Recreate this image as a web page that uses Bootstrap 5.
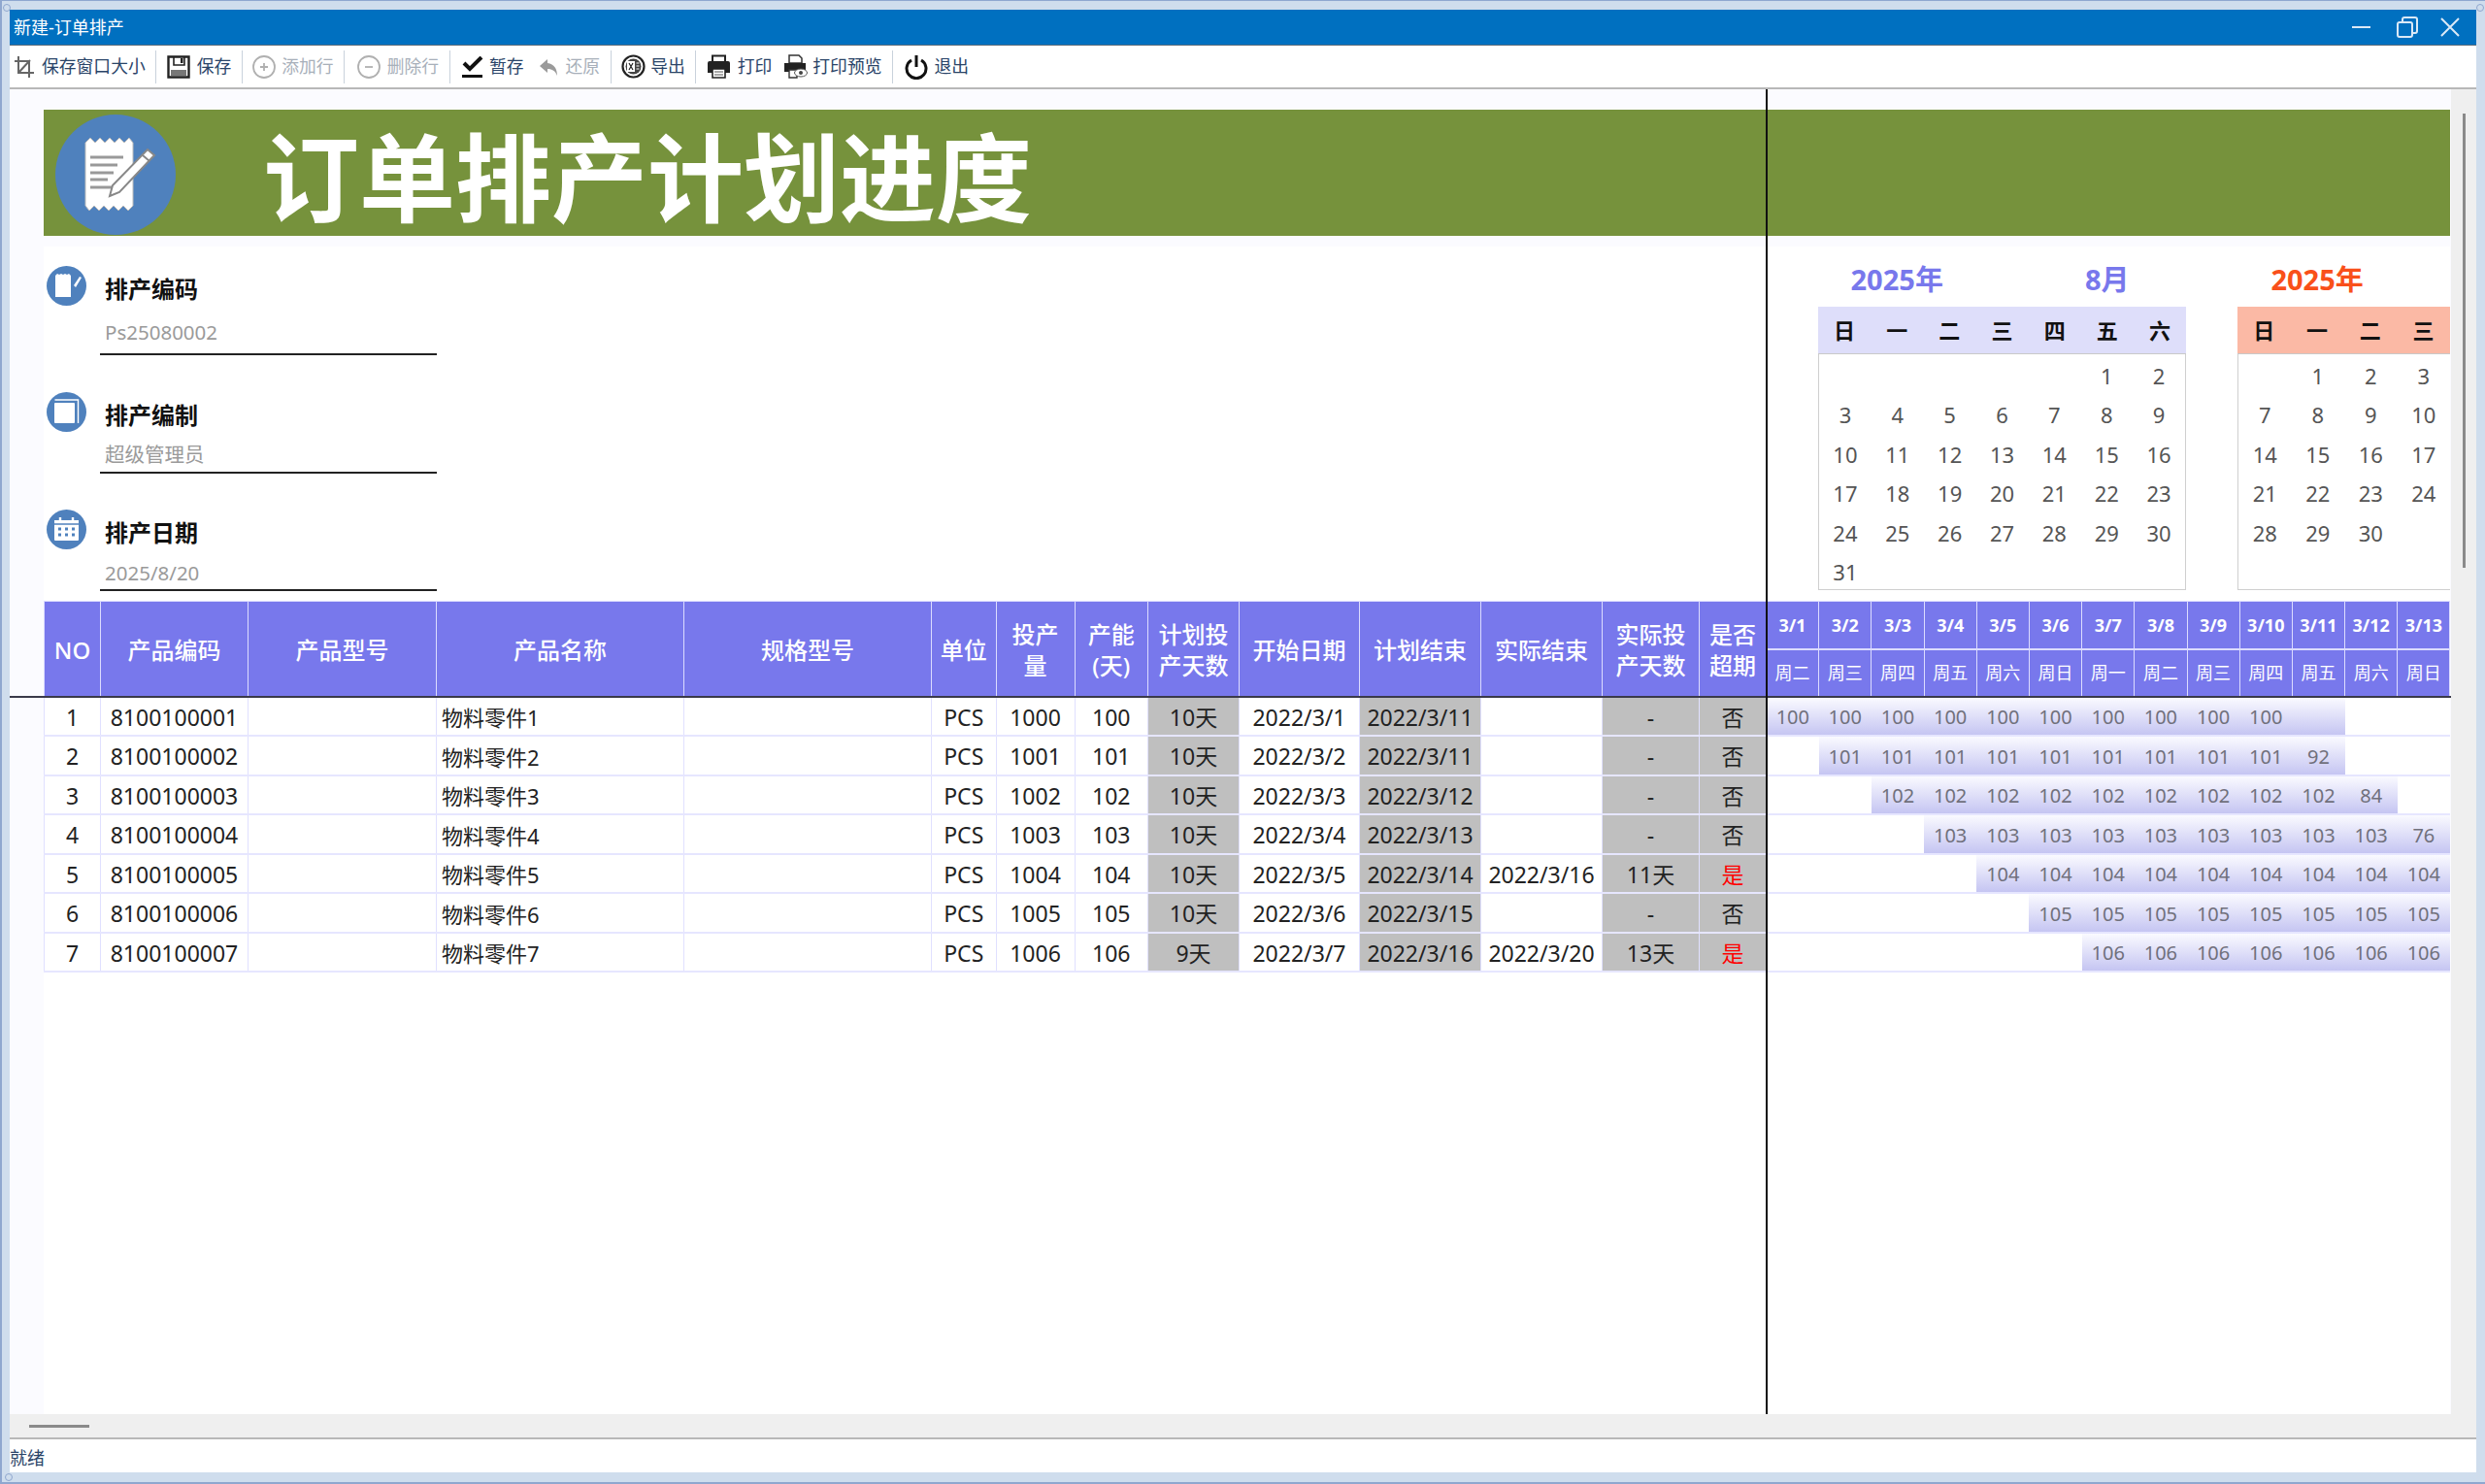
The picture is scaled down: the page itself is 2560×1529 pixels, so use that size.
<!DOCTYPE html>
<html lang="zh-CN">
<head>
<meta charset="UTF-8">
<title>新建-订单排产</title>
<link rel="stylesheet" href="https://cdn.jsdelivr.net/npm/bootstrap@5.3.3/dist/css/bootstrap.min.css">
<style>
    html, body { height: 100%; }
    body {
        font-family: "Noto Sans", "Noto Sans CJK SC", sans-serif;
        background: #cfdded;
        overflow: hidden;
    }
    .win {
        position: relative;
        height: 1529px;
        padding: 9px 9px 9px 8px;
        border-style: solid;
        border-color: #8fa7cf;
        border-width: 1px 0 2px 2px;
    }
    .grip {
        position: absolute;
        width: 8px;
        height: 8px;
        border: 1px solid #8fa7cf;
        border-radius: 50%;
    }
    .grip-tl { left: 1px; top: 3px; }
    .grip-tr { right: 1px; top: 3px; }
    .grip-bl { left: 3px; bottom: 1px; }
    .title-bar {
        height: 37px;
        background: #0070c0;
        border-bottom: 1px solid #5b6b7b;
        color: #fff;
        font-size: 18px;
        padding: 0 17px 0 4px;
    }
    .win-btns { gap: 27px; }
    .win-close { margin-left: -4px; }
    .tool-bar {
        height: 45px;
        background: #fff;
        border-bottom: 2px solid #b8b8b8;
        font-size: 17.8px;
        color: #2a4468;
        white-space: nowrap;
    }
    .tool-btn { padding: 0 6px; gap: 7px; }
    .tool-btn:first-child { padding-left: 4px; }
    .tool-btn.is-off { color: #a8b0ba; }
    .tool-sep { width: 1px; height: 34px; margin: 0 4.5px; background: #c9d2dc; }
    .gap-4px { gap: 4px; }
    .gap-5px { gap: 5px; }
    .gap-6px { gap: 6px; }
    .gap-8px { gap: 8px; }
    .push-2 { margin-left: 2px; }
    .push-3 { margin-left: 3px; }
    .push-4 { margin-left: 4px; }

    .sheet-wrap { height: 1365px; }
    .sheet {
        position: relative;
        background: #fbfbff;
        padding: 21px 1px 0 35px;
        overflow: hidden;
    }
    .freeze-v { position: absolute; left: 1809px; top: 0; bottom: 0; width: 2px; background: #111; }
    .freeze-h { position: absolute; left: 0; right: 0; top: 625px; height: 2px; background: #3a3a4a; }
    .banner { height: 130px; background: #76923c; padding: 5px 0 0 12px; color: #fff; }
    .banner-title {
        font-size: 99px;
        font-weight: 700;
        line-height: 1;
        margin: 15px 0 0 90px;
    }
    .page { background: #fff; margin-top: 11px; }
    .top-part { height: 365px; }
    .info-col { width: 410px; padding-left: 3px; }
    .info-item { gap: 14px; align-items: flex-start; }
    .info-dot { flex: none; width: 41px; height: 41px; margin-top: -8px; }
    .info-text { width: 347px; border-bottom: 2px solid #222; padding-left: 5px; }
    .info-label { font-size: 24px; font-weight: 700; line-height: 32px; color: #111; }
    .info-val { font-size: 20.5px; line-height: 28px; color: #9a9a9a; }
    .item-a { padding-top: 28px; }
    .item-a .info-val { margin-top: 14px; padding-bottom: 8px; }
    .item-b { padding-top: 46px; }
    .item-b .info-val { margin-top: 10px; padding-bottom: 4px; }
    .item-c { padding-top: 45px; }
    .item-c .info-val { margin-top: 11px; padding-bottom: 3px; }

    .cal-strip { height: 365px; margin-left: auto; gap: 53px; }
    .cal-box { flex: none; width: 379px; }
    .cal-head, .cal-week, .cal-days { display: grid; grid-template-columns: repeat(7, 1fr); text-align: center; }
    .cal-head { height: 62px; padding-top: 17px; font-size: 29px; font-weight: 700; line-height: 34px; color: #7878ec; }
    .cal-head .y-part { grid-column: 1 / 4; }
    .cal-head .m-part { grid-column: 5 / 8; }
    .cal-week { height: 49px; line-height: 49px; background: #dedefa; font-size: 22px; font-weight: 700; color: #111; border-bottom: 1px solid #c9c9c9; }
    .cal-days { height: 243px; padding-top: 2px; grid-auto-rows: 40.4px; line-height: 40.4px; font-size: 22px; color: #555; border: 1px solid #cfcfcf; border-top: 0; }
    /* the second month is cut by the frozen pane: only its first four days show */
    .cal-hot { width: 219px; }
    .cal-hot .cal-head, .cal-hot .cal-week, .cal-hot .cal-days { grid-template-columns: repeat(4, 1fr); }
    .cal-hot .cal-head { color: #f9501a; }
    .cal-hot .cal-week { background: #fbb9a5; }
    .cal-hot .cal-days { border-right: 0; }

    .plan-table.table { table-layout: fixed; width: 2478px; margin: 0; border-collapse: collapse; --bs-table-bg: transparent; }
    .plan-table.table > :not(caption) > * > * {
        padding: 3px 0 0;
        border: 1px solid #e0e0ff;
        border-bottom: 2px solid #e6e6ff;
        text-align: center;
        vertical-align: middle;
        font-size: 23px;
        line-height: 1;
        color: #222;
        box-shadow: none;
    }
    .plan-table.table thead th {
        background: #7878ec;
        color: #fff;
        font-weight: 500;
        font-size: 24px;
        line-height: 32px;
        border-color: #dcdcff;
    }
    .plan-table.table thead tr:last-child th,
    .plan-table.table thead th[rowspan] { border-bottom: 2px solid #3a3a4a; }
    .plan-table.table thead th.day-no { font-size: 18px; font-weight: 700; height: 49px; padding: 0; }
    .plan-table.table thead th.day-wk { font-size: 18px; font-weight: 400; height: 49px; padding: 0; }
    .plan-table.table tbody td { height: 40.5px; }
    .plan-table.table tbody td.cell-grey { background: #bfbfbf; }
    .plan-table.table tbody td.cell-name { text-align: left; padding-left: 5px; font-size: 22px; }
    .plan-table.table tbody td.cell-red { color: #f00; }
    .plan-table.table tbody td.gt { border-left: 0; border-right: 0; font-size: 20px; color: #70707c; }
    .plan-table.table tbody td.gt-on { background: linear-gradient(#fafaff, #c5c5f2); }

    .v-track { flex: none; width: 26px; background: #efefef; padding-top: 25px; }
    .v-thumb { width: 3px; height: 468px; background: #8a8a8a; margin: 0 auto; }
    .h-track { height: 26px; background: #efefef; border-bottom: 2px solid #b8b8b8; padding: 11px 0 0 20px; }
    .h-thumb { width: 62px; height: 3px; background: #8a8a8a; }
    .status-bar { height: 34px; background: #fff; font-size: 18px; line-height: 38px; color: #2a4468; }
</style>
</head>
<body>
<div class="win d-flex flex-column">
    <div class="grip grip-tl"></div>
    <div class="grip grip-tr"></div>
    <div class="grip grip-bl"></div>

    <div class="title-bar d-flex align-items-center">
        <span>新建-订单排产</span>
        <div class="win-btns d-flex align-items-center ms-auto">
            <svg width="19" height="20" viewBox="0 0 19 20"><path d="M0 10h19" stroke="#dbe9f6" stroke-width="2"/></svg>
            <svg width="22" height="22" viewBox="0 0 22 22" fill="none" stroke="#dbe9f6" stroke-width="2"><rect x="1" y="6" width="15" height="15" rx="2"/><path d="M6 6V3a2 2 0 0 1 2-2h11a2 2 0 0 1 2 2v12a2 2 0 0 1-2 2h-3"/></svg>
            <svg class="win-close" width="20" height="20" viewBox="0 0 20 20" stroke="#dbe9f6" stroke-width="2"><path d="M1 1l18 18M19 1L1 19"/></svg>
        </div>
    </div>

    <div class="tool-bar d-flex align-items-center">
        <div class="tool-btn d-flex align-items-center">
            <svg width="22" height="24" viewBox="0 0 22 24" fill="none" stroke="#666" stroke-width="2"><path d="M5 1v17h16M1 6h15v17M5 18L17 5"/></svg>
            <span>保存窗口大小</span>
        </div>
        <div class="tool-sep"></div>
        <div class="tool-btn d-flex align-items-center">
            <svg width="24" height="24" viewBox="0 0 24 24"><path d="M1.5 1.5h21v21h-21z" fill="#fff" stroke="#222" stroke-width="2.4"/><path d="M7 2h11v8H7z" fill="#fff" stroke="#222" stroke-width="1.6"/><path d="M14 3h2.5v5H14z" fill="#222"/><path d="M4 15h16v6H4z" fill="#777"/></svg>
            <span>保存</span>
        </div>
        <div class="tool-sep"></div>
        <div class="tool-btn is-off d-flex align-items-center gap-6px">
            <svg width="24" height="24" viewBox="0 0 24 24" fill="none" stroke="#b0b0b0" stroke-width="1.8"><circle cx="12" cy="12" r="11"/><path d="M12 8v8M8 12h8"/></svg>
            <span>添加行</span>
        </div>
        <div class="tool-sep"></div>
        <div class="tool-btn is-off push-2 d-flex align-items-center">
            <svg width="24" height="24" viewBox="0 0 24 24" fill="none" stroke="#b0b0b0" stroke-width="1.8"><circle cx="12" cy="12" r="11"/><path d="M8 12h8"/></svg>
            <span>删除行</span>
        </div>
        <div class="tool-sep"></div>
        <div class="tool-btn push-2 d-flex align-items-center gap-6px">
            <svg width="22" height="22" viewBox="0 0 22 22"><path d="M2 7l6 6L20 1" fill="none" stroke="#111" stroke-width="4"/><path d="M0 19h21v3H0z" fill="#111"/></svg>
            <span>暂存</span>
        </div>
        <div class="tool-btn push-3 is-off d-flex align-items-center gap-8px">
            <svg width="20" height="20" viewBox="0 0 20 20"><path d="M9 2L1 9l8 7v-4c5 0 8 2 10 7 0-7-3-12-10-13z" fill="#9a9a9a"/></svg>
            <span>还原</span>
        </div>
        <div class="tool-sep"></div>
        <div class="tool-btn d-flex align-items-center gap-5px">
            <svg width="25" height="25" viewBox="0 0 25 25"><circle cx="12.5" cy="12.5" r="11" fill="#fff" stroke="#222" stroke-width="2.2"/><circle cx="12.5" cy="12.5" r="8" fill="#444"/><path d="M6 7h8v11H6z" fill="#fff"/><path d="M8 9l4 7M12 9l-4 7" stroke="#222" stroke-width="1.2"/><path d="M15.5 9h3M15.5 12h3M15.5 15h3" stroke="#fff"/></svg>
            <span>导出</span>
        </div>
        <div class="tool-sep"></div>
        <div class="tool-btn d-flex align-items-center">
            <svg width="25" height="25" viewBox="0 0 25 25"><path d="M6 1.5h13v8H6z" fill="#fff" stroke="#222" stroke-width="2"/><path d="M1 9a2 2 0 0 1 2-2h19a2 2 0 0 1 2 2v10H1z" fill="#222"/><path d="M6 15h13v9H6z" fill="#fff" stroke="#222" stroke-width="1.6"/><path d="M8 18h9M8 21h9" stroke="#555"/></svg>
            <span>打印</span>
        </div>
        <div class="tool-btn d-flex align-items-center gap-5px">
            <svg width="25" height="25" viewBox="0 0 25 25"><path d="M6 1h10l3 3v5H6z" fill="#fff" stroke="#333" stroke-width="1.5"/><path d="M1 9h22v9H1z" fill="#222"/><path d="M6 16h8v8H6z" fill="#fff" stroke="#333" stroke-width="1.4"/><ellipse cx="18" cy="19" rx="6.5" ry="4" fill="#fff" stroke="#555"/><circle cx="18" cy="19" r="2" fill="#444"/></svg>
            <span>打印预览</span>
        </div>
        <div class="tool-sep"></div>
        <div class="tool-btn push-2 d-flex align-items-center gap-6px">
            <svg width="24" height="26" viewBox="0 0 24 26" fill="none" stroke="#111" stroke-width="3"><path d="M7 6a10 10 0 1 0 10 0"/><path d="M12 1v12"/></svg>
            <span>退出</span>
        </div>
    </div>

    <div class="sheet-wrap d-flex">
        <div class="sheet flex-grow-1 d-flex flex-column">
            <div class="banner d-flex">
                <svg width="124" height="124" viewBox="0 0 124 124">
                    <circle cx="62" cy="62" r="62" fill="#4f81bd"/>
                    <path d="M31 29l5-5 5 5 5-5 5 5 5-5 5 5 5-5 5 5 5-5 4 5v65l-5 5-5-5-5 5-5-5-5 5-5-5-5 5-5-5-5 5-4-5z" fill="#fff" stroke="#bbb"/>
                    <path d="M36 44h34M36 52h28M36 60h24M36 67h18M36 75h22" stroke="#999" stroke-width="3"/>
                    <path d="M95 36l7 6-36 38-10 4 3-11z" fill="#fff" stroke="#888" stroke-width="2"/>
                    <path d="M90 42l7 6" stroke="#888" stroke-width="2"/>
                </svg>
                <div class="banner-title">订单排产计划进度</div>
            </div>
            <div class="page flex-grow-1">
                <div class="top-part d-flex">
                    <div class="info-col">
                        <div class="info-item item-a d-flex">
                            <svg class="info-dot" viewBox="0 0 41 41"><circle cx="20.5" cy="20.5" r="20.5" fill="#4f81bd"/><path d="M9 10l2-2 2 1 2-1 2 1 2-1 2 1 2-1 2 2v22H9z" fill="#fff"/><path d="M28 20l6-9 2 1-6 10z" fill="#fff"/></svg>
                            <div class="info-text">
                                <div class="info-label">排产编码</div>
                                <div class="info-val">Ps25080002</div>
                            </div>
                        </div>
                        <div class="info-item item-b d-flex">
                            <svg class="info-dot" viewBox="0 0 41 41"><circle cx="20.5" cy="20.5" r="20.5" fill="#4f81bd"/><path d="M8.5 8h24v24" fill="none" stroke="#fff" stroke-width="1.4"/><rect x="8" y="11" width="21" height="21" rx="1" fill="#fff"/></svg>
                            <div class="info-text">
                                <div class="info-label">排产编制</div>
                                <div class="info-val">超级管理员</div>
                            </div>
                        </div>
                        <div class="info-item item-c d-flex">
                            <svg class="info-dot" viewBox="0 0 41 41"><circle cx="20.5" cy="20.5" r="20.5" fill="#4f81bd"/><path d="M8 11h25v20a1 1 0 0 1-1 1H9a1 1 0 0 1-1-1z" fill="#fff"/><path d="M14 8v5M27 8v5" stroke="#fff" stroke-width="2.4"/><path d="M8 15h25" stroke="#4f81bd" stroke-width="1.5"/><path d="M12 20h3M19 20h3M26 20h3M12 26h3M19 26h3M26 26h3" stroke="#4f81bd" stroke-width="3"/></svg>
                            <div class="info-text">
                                <div class="info-label">排产日期</div>
                                <div class="info-val">2025/8/20</div>
                            </div>
                        </div>
                    </div>
                    <div class="cal-strip d-flex">
                        <div class="cal-box" id="calAug"></div>
                        <div class="cal-box cal-hot" id="calSep"></div>
                    </div>
                </div>
                <table class="table plan-table">
                    <colgroup id="planCols"></colgroup>
                    <thead>
                        <tr id="planHead1">
                            <th rowspan="2">NO</th>
                            <th rowspan="2">产品编码</th>
                            <th rowspan="2">产品型号</th>
                            <th rowspan="2">产品名称</th>
                            <th rowspan="2">规格型号</th>
                            <th rowspan="2">单位</th>
                            <th rowspan="2">投产<br>量</th>
                            <th rowspan="2">产能<br>(天)</th>
                            <th rowspan="2">计划投<br>产天数</th>
                            <th rowspan="2">开始日期</th>
                            <th rowspan="2">计划结束</th>
                            <th rowspan="2">实际结束</th>
                            <th rowspan="2">实际投<br>产天数</th>
                            <th rowspan="2">是否<br>超期</th>
                        </tr>
                        <tr id="planHead2"></tr>
                    </thead>
                    <tbody id="planBody"></tbody>
                </table>
            </div>
            <div class="freeze-h"></div>
            <div class="freeze-v"></div>
        </div>
        <div class="v-track"><div class="v-thumb"></div></div>
    </div>
    <div class="h-track"><div class="h-thumb"></div></div>
    <div class="status-bar">就绪</div>
</div>

<script src="https://cdn.jsdelivr.net/npm/bootstrap@5.3.3/dist/js/bootstrap.bundle.min.js"></script>
<script>
    const weekNames = ["日", "一", "二", "三", "四", "五", "六"];

    // cols: how many weekday columns of the month are visible
    function fillCal(id, year, monthText, startDay, total, cols) {
        let cells = "";
        for (let i = 0; i < startDay; i++) cells += "<div></div>";
        for (let d = 1; d <= total; d++) {
            if ((d + startDay - 1) % 7 < cols) cells += "<div>" + d + "</div>";
        }
        document.getElementById(id).innerHTML =
            '<div class="cal-head"><div class="y-part">' + year + '年</div>' +
            (monthText ? '<div class="m-part">' + monthText + "</div>" : "") + "</div>" +
            '<div class="cal-week">' + weekNames.slice(0, cols).map(w => "<div>" + w + "</div>").join("") + "</div>" +
            '<div class="cal-days">' + cells + "</div>";
    }
    fillCal("calAug", 2025, "8月", 5, 31, 7);
    fillCal("calSep", 2025, "", 1, 30, 4);

    // column widths, the last 13 are the day columns
    const colWidths = [58, 152, 194, 255, 255, 66.5, 81, 75.5, 94, 124, 125, 125, 100, 69];
    for (let i = 0; i < 13; i++) colWidths.push(54.2);
    document.getElementById("planCols").innerHTML = colWidths.map(w => '<col style="width:' + w + 'px">').join("");

    const dayWeek = ["周二", "周三", "周四", "周五", "周六", "周日", "周一", "周二", "周三", "周四", "周五", "周六", "周日"];
    let head1 = "", head2 = "";
    dayWeek.forEach((w, i) => {
        head1 += '<th class="day-no">3/' + (i + 1) + "</th>";
        head2 += '<th class="day-wk">' + w + "</th>";
    });
    document.getElementById("planHead1").insertAdjacentHTML("beforeend", head1);
    document.getElementById("planHead2").innerHTML = head2;

    // [plan days, start, plan end, real end, real days, late, last day value, bar length]
    const rows = [
        ["10天", "2022/3/1", "2022/3/11", "", "-", "否", null, 11],
        ["10天", "2022/3/2", "2022/3/11", "", "-", "否", 92, 10],
        ["10天", "2022/3/3", "2022/3/12", "", "-", "否", 84, 10],
        ["10天", "2022/3/4", "2022/3/13", "", "-", "否", 76, 10],
        ["10天", "2022/3/5", "2022/3/14", "2022/3/16", "11天", "是", null, 9],
        ["10天", "2022/3/6", "2022/3/15", "", "-", "否", null, 8],
        ["9天", "2022/3/7", "2022/3/16", "2022/3/20", "13天", "是", null, 7]
    ];
    let body = "";
    rows.forEach((r, i) => {
        const qty = 100 + i;
        let tr = "<tr><td>" + (i + 1) + "</td><td>810010000" + (i + 1) + "</td><td></td>" +
            '<td class="cell-name">物料零件' + (i + 1) + "</td><td></td><td>PCS</td><td>" + (1000 + i) + "</td><td>" + qty + "</td>" +
            '<td class="cell-grey">' + r[0] + "</td><td>" + r[1] + '</td><td class="cell-grey">' + r[2] + "</td><td>" + r[3] + "</td>" +
            '<td class="cell-grey">' + r[4] + '</td><td class="cell-grey' + (r[5] === "是" ? " cell-red" : "") + '">' + r[5] + "</td>";
        for (let d = 0; d < 13; d++) {
            const onBar = d >= i && d < i + r[7];
            let val = "";
            if (onBar) {
                if (d === i + r[7] - 1 && r[6] !== null) val = r[6];
                else if (i === 0 && d === 10) val = "";
                else val = qty;
            }
            tr += '<td class="gt' + (onBar ? " gt-on" : "") + '">' + val + "</td>";
        }
        body += tr + "</tr>";
    });
    document.getElementById("planBody").innerHTML = body;
</script>
</body>
</html>
